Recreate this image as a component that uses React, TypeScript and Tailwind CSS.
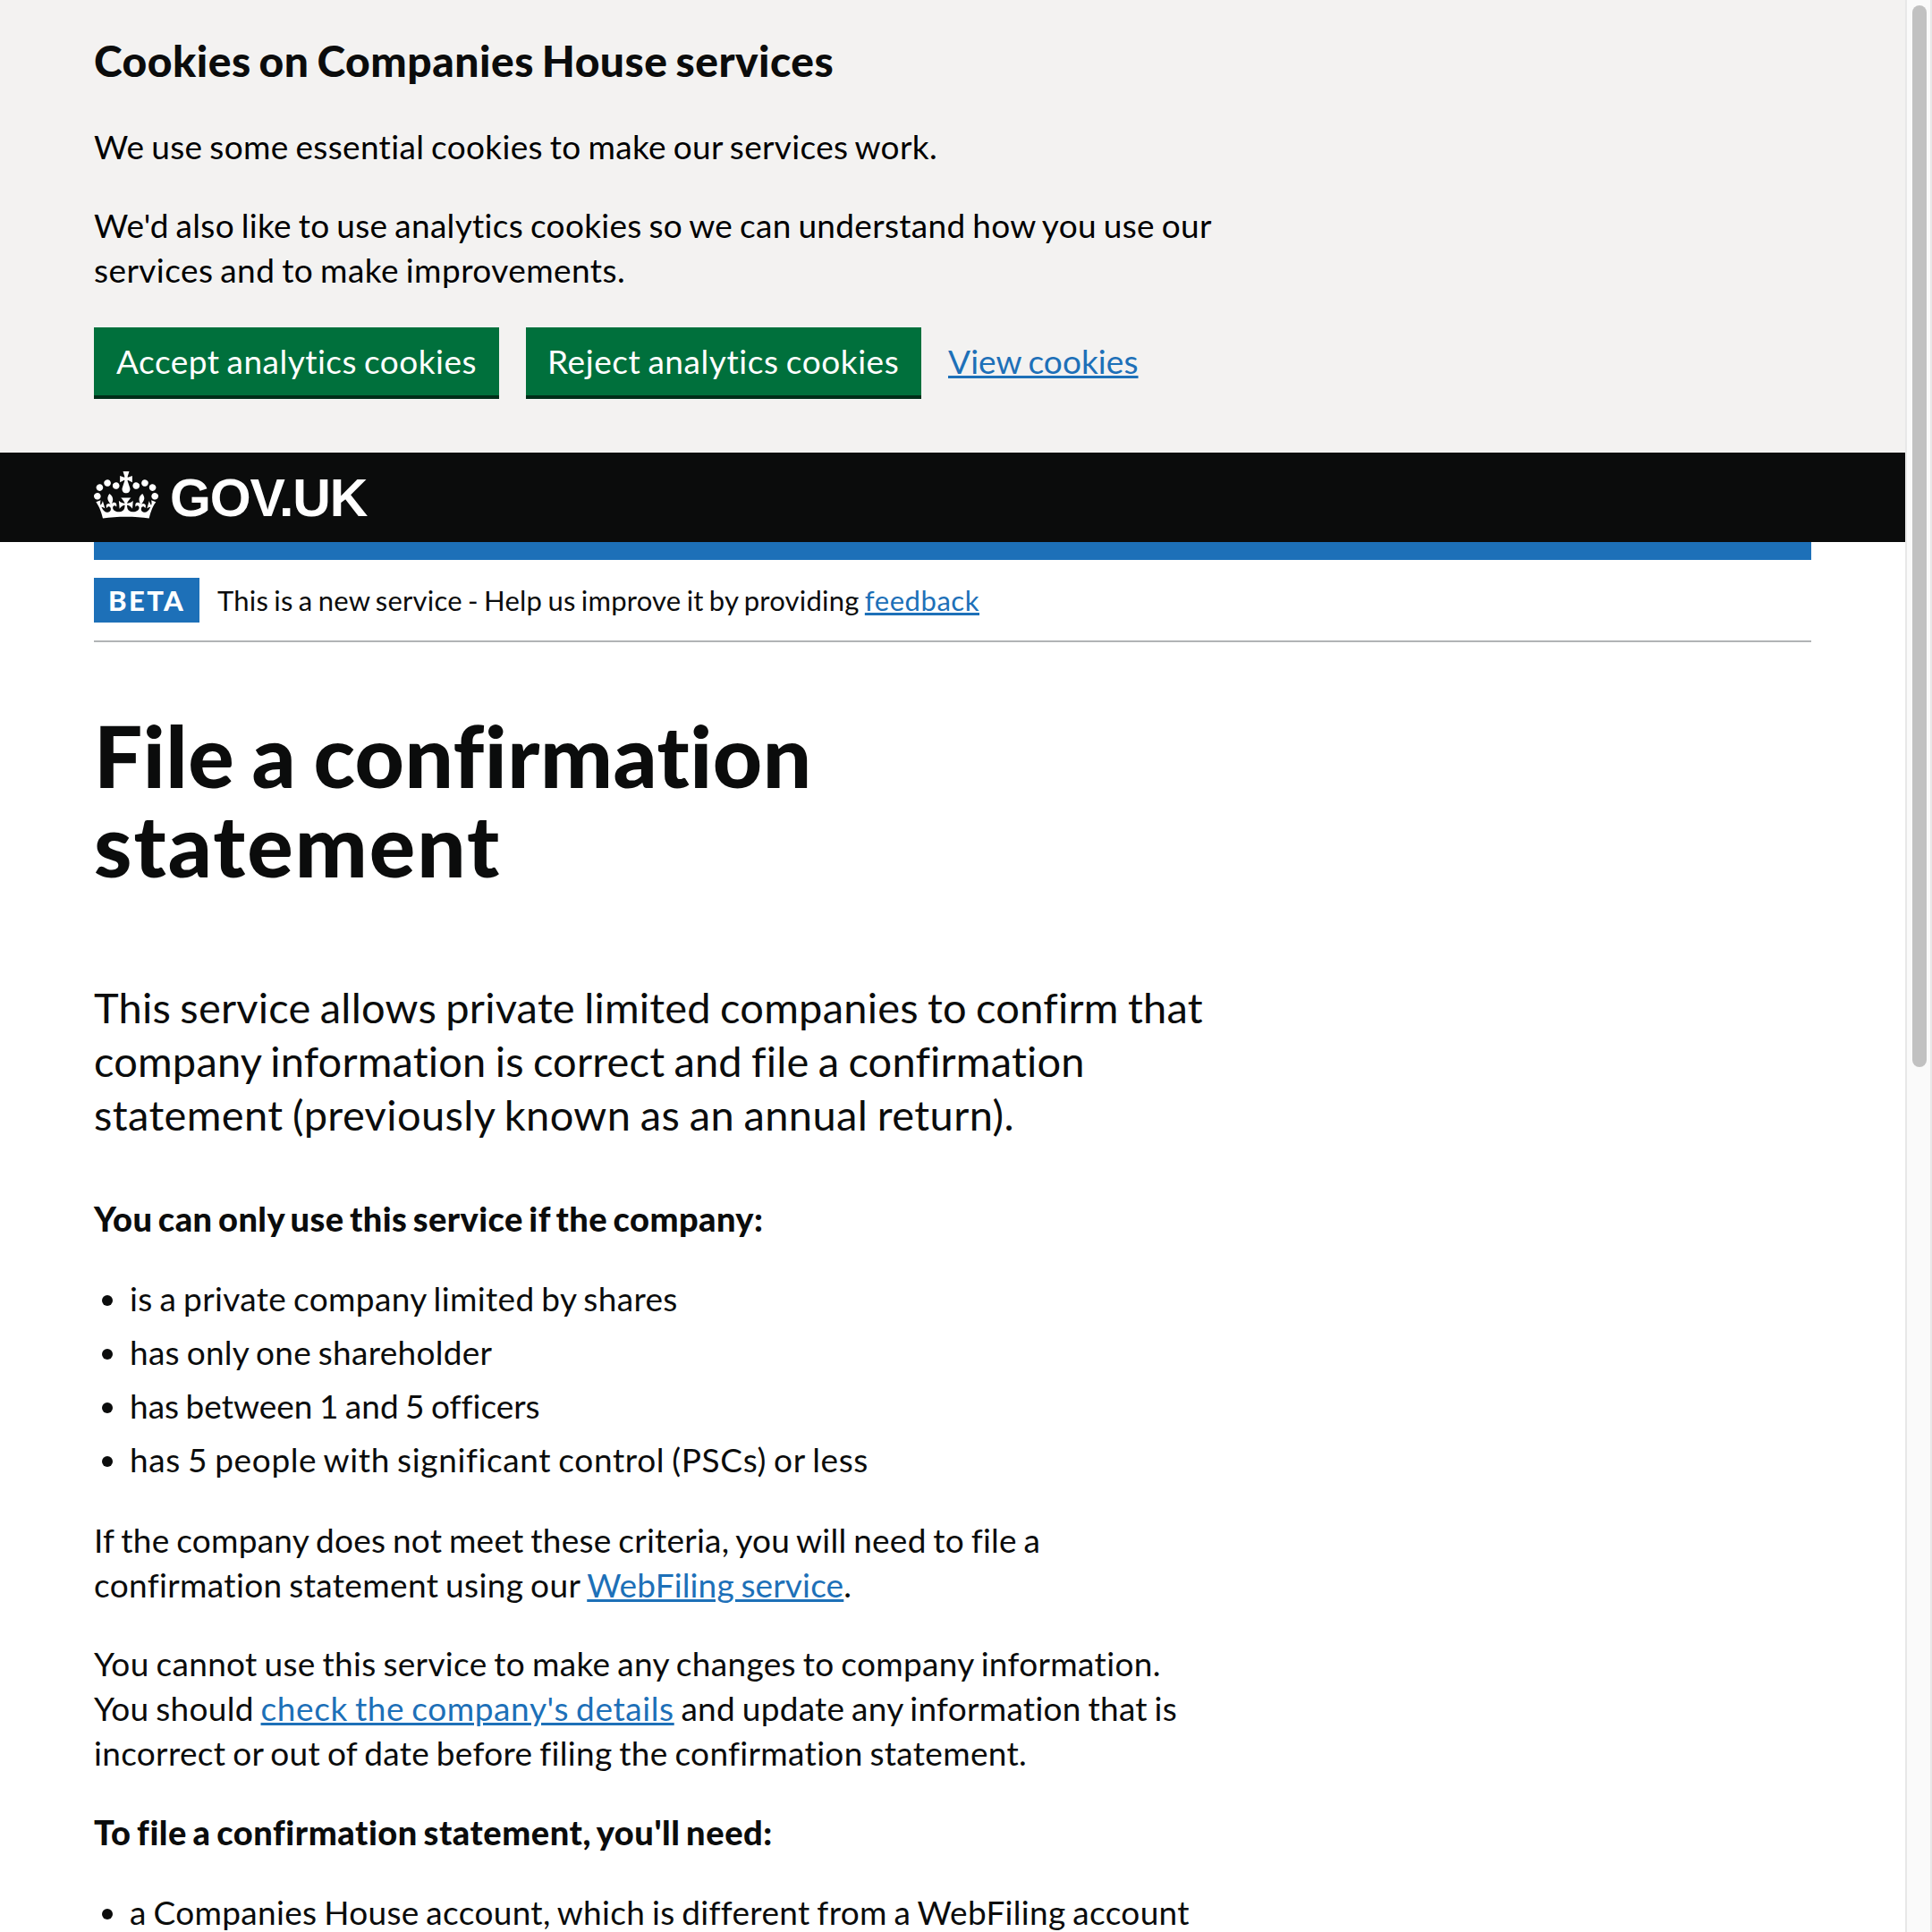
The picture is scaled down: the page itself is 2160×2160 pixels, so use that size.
import React, { type ReactNode } from "react";

function Line({ className = "", children }: { className?: string; children: ReactNode }) {
  return <span className={`block whitespace-nowrap ${className}`}>{children}</span>;
}

function Link({ className = "", children }: { className?: string; children: ReactNode }) {
  return (
    <a href="#" className={`text-[#1d70b8] underline decoration-[3px] underline-offset-[2px] ${className}`}>
      {children}
    </a>
  );
}

function Button({ className, children }: { className: string; children: ReactNode }) {
  return (
    <button
      type="button"
      className={`h-[76px] bg-[#00703c] py-[13px] text-left leading-[50px] whitespace-nowrap text-white shadow-[0_4px_0_#002d18] [word-spacing:-2px] ${className}`}
    >
      {children}
    </button>
  );
}

function Bullet({ className, children }: { className: string; children: ReactNode }) {
  return (
    <li className="flex">
      <span className="mt-[21px] mr-[19px] ml-[9px] h-3 w-3 shrink-0 rounded-full bg-[#0b0c0c]" />
      <span className={`whitespace-nowrap ${className}`}>{children}</span>
    </li>
  );
}

function Crown() {
  return (
    <svg viewBox="0 0 132 97" className="h-[53px] w-[72px] fill-white" aria-hidden="true">
      <path d="M25 30.2c3.5 1.5 7.7-.2 9.1-3.7 1.5-3.6-.2-7.8-3.9-9.2-3.6-1.4-7.6.3-9.1 3.9-1.4 3.5.3 7.5 3.9 9zM9 39.5c3.6 1.5 7.8-.2 9.2-3.7 1.5-3.6-.2-7.8-3.9-9.1-3.6-1.5-7.6.2-9.1 3.8-1.4 3.5.3 7.5 3.8 9zM4.4 57.2c3.5 1.5 7.7-.2 9.1-3.8 1.5-3.6-.2-7.7-3.9-9.1-3.5-1.5-7.6.3-9.1 3.8-1.4 3.5.3 7.6 3.9 9.1zm38.3-21.4c3.5 1.5 7.7-.2 9.1-3.8 1.5-3.6-.2-7.7-3.9-9.1-3.6-1.5-7.6.3-9.1 3.8-1.3 3.6.4 7.7 3.9 9.1zm64.4-5.6c-3.6 1.5-7.8-.2-9.1-3.7-1.5-3.6.2-7.8 3.8-9.2 3.6-1.4 7.7.3 9.2 3.9 1.3 3.5-.4 7.5-3.9 9zm15.9 9.3c-3.6 1.5-7.7-.2-9.1-3.7-1.5-3.6.2-7.8 3.7-9.1 3.6-1.5 7.7.2 9.2 3.8 1.5 3.5-.3 7.5-3.8 9zm4.7 17.7c-3.6 1.5-7.8-.2-9.2-3.8-1.5-3.6.2-7.7 3.9-9.1 3.6-1.5 7.7.3 9.2 3.8 1.3 3.5-.4 7.6-3.9 9.1zM89.3 35.8c-3.6 1.5-7.8-.2-9.2-3.8-1.4-3.6.2-7.7 3.9-9.1 3.6-1.5 7.7.3 9.2 3.8 1.4 3.6-.3 7.7-3.9 9.1zM69.7 17.7l8.9 4.7V9.3l-8.9 2.8c-.2-.3-.5-.6-.9-.9L72.4 0H59.6l3.5 11.2c-.3.3-.6.5-.9.9l-8.8-2.8v13.1l8.8-4.7c.3.3.6.7.9.9l-5 15.4v.1c-.2.8-.4 1.6-.4 2.4 0 4.1 3.1 7.5 7 8.1h.2c.3 0 .7.1 1 .1.4 0 .7 0 1-.1h.2c4-.6 7.1-4.1 7.1-8.1 0-.8-.1-1.7-.4-2.4V34l-5.1-15.4c.4-.2.7-.6 1-.9zM66 92.8c16.9 0 32.8 1.1 47.1 3.2 4-16.9 8.9-26.7 14-33.5l-9.6-3.4c1 4.9 1.1 7.2 0 10.2-1.5-1.4-3-4.3-4.2-8.7L108.6 76c2.8-2 5-3.2 7.5-3.3-4.4 9.4-10 11.9-13.6 11.2-4.3-.8-6.3-4.6-5.6-7.9 1-4.7 5.7-5.9 8-.5 4.3-8.7-3-11.4-7.6-8.8 7.1-7.2 7.9-13.5 2.1-21.1-8 6.1-8.1 12.3-4.5 20.8-4.7-5.4-12.1-2.5-9.5 6.2 3.4-5.2 7.9-2 7.2 3.1-.6 4.3-6.4 7.8-13.5 7.2-10.3-.9-10.9-8-11.2-13.8 2.5-.5 7.1 1.8 11 7.3L80.2 60c-4.1 4.4-8 5.3-12.3 5.4 1.4-4.4 8-11.6 8-11.6H55.5s6.4 7.2 7.9 11.6c-4.2-.1-8-1-12.3-5.4l1.4 16.4c3.9-5.5 8.5-7.7 10.9-7.3-.3 5.8-.9 12.8-11.1 13.8-7.2.6-12.9-2.9-13.5-7.2-.7-5 3.8-8.3 7.1-3.1 2.7-8.7-4.6-11.6-9.4-6.2 3.7-8.5 3.6-14.7-4.6-20.8-5.8 7.6-5 13.9 2.2 21.1-4.7-2.6-11.9.1-7.7 8.8 2.3-5.5 7.1-4.2 8.1.5.7 3.3-1.3 7.1-5.7 7.9-3.5.7-9-1.8-13.5-11.2 2.5.1 4.7 1.3 7.5 3.3l-4.7-15.4c-1.2 4.4-2.7 7.2-4.3 8.7-1.1-3-.9-5.3 0-10.2l-9.5 3.4c5 6.9 9.9 16.7 14 33.5 14.8-2.1 30.8-3.2 47.7-3.2z" />
    </svg>
  );
}

function CookieBanner() {
  return (
    <section className="h-[506px] bg-[#f3f2f1] px-[105px] pt-[38px] text-black">
      <h2 className="text-[48px] leading-[60px] font-black whitespace-nowrap tracking-[0.5px] text-[#0b0c0c] [word-spacing:-3px]">
        Cookies on Companies House services
      </h2>
      <p className="mt-[41px]">
        <Line className="tracking-[0.34px]">We use some essential cookies to make our services work.</Line>
      </p>
      <p className="mt-[38px]">
        <Line className="tracking-[0.32px]">
          We'd also like to use analytics cookies so we can understand how you use our
        </Line>
        <Line className="tracking-[0.43px]">services and to make improvements.</Line>
      </p>
      <div className="mt-[39px] flex">
        <Button className="mr-[30px] w-[453px] pl-[25px] tracking-[0.5px]">Accept analytics cookies</Button>
        <Button className="mr-[30px] w-[442px] pl-[24px] tracking-[0.58px]">Reject analytics cookies</Button>
        <div className="pt-[13px] whitespace-nowrap">
          <Link className="tracking-[0.08px]">View cookies</Link>
        </div>
      </div>
    </section>
  );
}

function Header() {
  return (
    <header className="flex h-[100px] items-start bg-[#0b0c0c] pt-[21px] pl-[105px]">
      <Crown />
      <span className="ml-[13px] font-['Liberation_Sans',sans-serif] text-[59px] leading-[60px] font-bold tracking-[-1.2px] text-white">
        GOV.UK
      </span>
    </header>
  );
}

function PhaseBanner() {
  return (
    <div className="flex border-t-[20px] border-b-2 border-t-[#1d70b8] border-b-[#b1b4b6] py-5 text-[31px] leading-[50px]">
      <strong className="mr-5 w-[118px] bg-[#1d70b8] pl-4 font-black tracking-[2.4px] text-white">BETA</strong>
      <span className="whitespace-nowrap">
        <span className="tracking-[0.24px]">This is a new service - Help us improve it by providing </span>
        <Link className="tracking-[0.55px]">feedback</Link>
      </span>
    </div>
  );
}

function Scrollbar() {
  return (
    <div className="h-full w-[30px] shrink-0 border-x-2 border-[#e8e8e8] bg-[#fafafa] pt-[6px] pl-[6px]">
      <div className="h-[1187px] w-4 rounded-full bg-[#c1c1c1]" />
    </div>
  );
}

export default function App() {
  return (
    <div className="flex h-[2160px] w-[2160px] overflow-hidden bg-white font-[Lato,sans-serif] text-[37px] leading-[50px] text-[#0b0c0c] [font-variant-ligatures:none] [word-spacing:-2px]">
      <div className="w-[2130px] shrink-0">
        <CookieBanner />
        <Header />
        <div className="mx-[105px]">
          <PhaseBanner />
          <main>
            <h1 className="mt-[76px] text-[96px] leading-[100px] font-black [word-spacing:-4px]">
              <Line className="tracking-[0.52px]">File a confirmation</Line>
              <Line className="tracking-[2.05px]">statement</Line>
            </h1>
            <p className="mt-[102px] text-[47px] leading-[60px]">
              <Line className="tracking-[0.22px]">This service allows private limited companies to confirm that</Line>
              <Line className="tracking-[0.18px]">company information is correct and file a confirmation</Line>
              <Line className="tracking-[0.4px]">statement (previously known as an annual return).</Line>
            </p>
            <p className="mt-[61px] text-[38px] font-black [word-spacing:-3px]">
              <Line className="tracking-[0.43px]">You can only use this service if the company:</Line>
            </p>
            <ul className="mt-10 flex flex-col gap-[10px]">
              <Bullet className="tracking-[0.36px]">is a private company limited by shares</Bullet>
              <Bullet className="tracking-[0.28px]">has only one shareholder</Bullet>
              <Bullet className="tracking-[0px]">has between 1 and 5 officers</Bullet>
              <Bullet className="tracking-[0.63px]">has 5 people with significant control (PSCs) or less</Bullet>
            </ul>
            <p className="mt-10">
              <Line className="tracking-[0.25px]">
                If the company does not meet these criteria, you will need to file a
              </Line>
              <Line>
                <span className="tracking-[0.35px]">confirmation statement using our </span>
                <Link className="tracking-[0.15px]">WebFiling service</Link>.
              </Line>
            </p>
            <p className="mt-[38px]">
              <Line className="tracking-[0.33px]">
                You cannot use this service to make any changes to company information.
              </Line>
              <Line>
                <span className="tracking-[0.29px]">You should </span>
                <Link className="tracking-[0.6px]">check the company's details</Link>
                <span className="tracking-[0.27px]"> and update any information that is</span>
              </Line>
              <Line className="tracking-[0.32px]">
                incorrect or out of date before filing the confirmation statement.
              </Line>
            </p>
            <p className="mt-[38px] text-[38px] font-black [word-spacing:-3px]">
              <Line className="tracking-[0.56px]">To file a confirmation statement, you'll need:</Line>
            </p>
            <ul className="mt-10">
              <Bullet className="tracking-[0.32px]">
                a Companies House account, which is different from a WebFiling account
              </Bullet>
            </ul>
          </main>
        </div>
      </div>
      <Scrollbar />
    </div>
  );
}
